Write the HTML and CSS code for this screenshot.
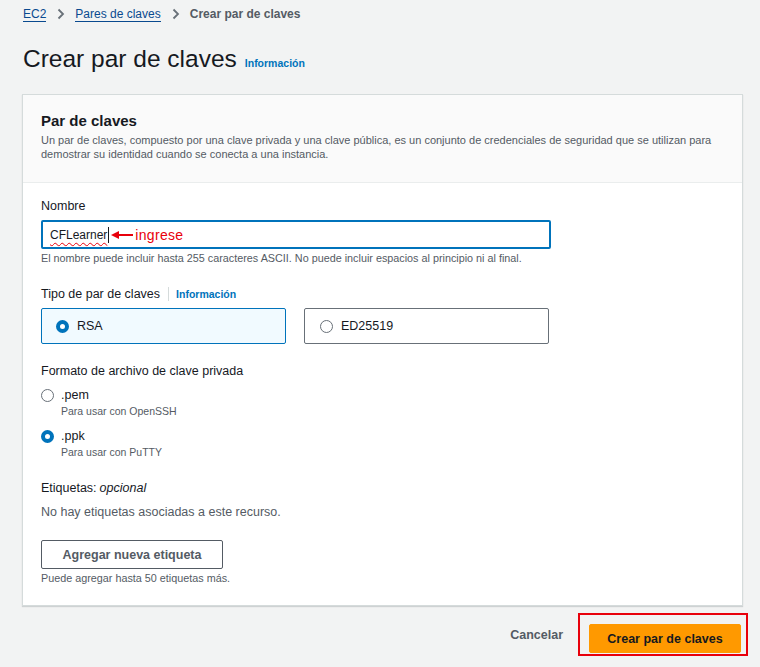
FILE: index.html
```html
<!DOCTYPE html>
<html lang="es">
<head>
<meta charset="utf-8">
<title>Crear par de claves</title>
<link rel="stylesheet" href="styles.css">
</head>
<body>
<div class="page">
  <nav class="crumbs">
    <a class="crumb-link">EC2</a>
    <svg class="chev" width="8" height="12" viewBox="0 0 8 12"><path d="M1.5 1.5 L6 6 L1.5 10.5" fill="none" stroke="#687078" stroke-width="1.8"/></svg>
    <a class="crumb-link">Pares de claves</a>
    <svg class="chev" width="8" height="12" viewBox="0 0 8 12"><path d="M1.5 1.5 L6 6 L1.5 10.5" fill="none" stroke="#687078" stroke-width="1.8"/></svg>
    <span class="crumb-current">Crear par de claves</span>
  </nav>
  <div class="title-row">
    <h1 class="title">Crear par de claves</h1>
    <a class="info">Información</a>
  </div>

  <section class="card">
    <header class="card-head">
      <h2 class="card-title">Par de claves</h2>
      <p class="card-desc">Un par de claves, compuesto por una clave privada y una clave pública, es un conjunto de credenciales de seguridad que se utilizan para demostrar su identidad cuando se conecta a una instancia.</p>
    </header>
    <div class="card-body">
      <div class="field">
        <div class="label">Nombre</div>
        <div class="input">
          <span class="value">CFLearner</span><span class="caret"></span>
          <svg class="arrow" width="22" height="10" viewBox="0 0 22 10"><path d="M0 5 L8 1 L8 9 Z" fill="#e8000b"/><path d="M7 5 H22" stroke="#e8000b" stroke-width="2"/></svg>
          <span class="note">ingrese</span>
        </div>
        <div class="hint name-hint">El nombre puede incluir hasta 255 caracteres ASCII. No puede incluir espacios al principio ni al final.</div>
      </div>

      <div class="field">
        <div class="label">Tipo de par de claves <span class="sep"></span><a class="info small">Información</a></div>
        <div class="tiles">
          <div class="tile selected"><span class="radio on"></span><span class="tile-text">RSA</span></div>
          <div class="tile"><span class="radio"></span><span class="tile-text">ED25519</span></div>
        </div>
      </div>

      <div class="field format">
        <div class="label">Formato de archivo de clave privada</div>
        <div class="opt">
          <span class="radio"></span>
          <div><div class="opt-title">.pem</div><div class="opt-desc">Para usar con OpenSSH</div></div>
        </div>
        <div class="opt">
          <span class="radio on"></span>
          <div><div class="opt-title">.ppk</div><div class="opt-desc">Para usar con PuTTY</div></div>
        </div>
      </div>

      <div class="field tags">
        <div class="label">Etiquetas: <i>opcional</i></div>
        <div class="empty">No hay etiquetas asociadas a este recurso.</div>
        <button class="btn-normal">Agregar nueva etiqueta</button>
        <div class="hint">Puede agregar hasta 50 etiquetas más.</div>
      </div>
    </div>
  </section>

  <div class="actions">
    <a class="cancel">Cancelar</a>
    <div class="highlight"><button class="btn-primary">Crear par de claves</button></div>
  </div>
</div>
</body>
</html>
```

FILE: styles.css
```css
* { box-sizing: border-box; }
html, body { margin: 0; padding: 0; }
body {
  background: #f2f3f3;
  font-family: "Liberation Sans", Arial, sans-serif;
  color: #16191f;
  width: 760px;
  height: 667px;
  overflow: hidden;
}
.page { padding: 6px 17px 0 22px; }
.crumbs {
  display: flex;
  align-items: center;
  height: 16px;
  font-size: 12px;
  padding-left: 1px;
}
.crumb-link {
  color: #0a4a8f;
  border-bottom: 1px solid #0a4a8f;
  line-height: 14px;
}
.chev { margin: 0 10px 0 11px; }
.crumb-current { color: #545b64; font-weight: bold; }
.title-row {
  display: flex;
  align-items: baseline;
  margin-top: 21px;
  padding-left: 1px;
}
.title {
  margin: 0;
  font-size: 24.5px;
  font-weight: normal;
  line-height: 32px;
  color: #16191f;
}
.info {
  color: #0073bb;
  font-size: 10.5px;
  font-weight: bold;
  margin-left: 8px;
}
.card {
  margin-top: 19px;
  width: 721px;
  background: #fff;
  border: 1px solid #d5dbdb;
  box-shadow: 0 1px 1px rgba(0,28,36,0.15);
}
.card-head {
  background: #fafafa;
  border-bottom: 1px solid #eaeded;
  padding: 16px 18px 21px 18px;
}
.card-title {
  margin: 0;
  font-size: 15px;
  font-weight: bold;
  line-height: 20px;
}
.card-desc {
  margin: 2px 0 0 0;
  font-size: 11px;
  line-height: 14px;
  color: #545b64;
}
.card-body { padding: 14px 18px 20px 18px; }
.field { margin-bottom: 20px; }
.label {
  font-size: 12.5px;
  line-height: 18px;
  display: flex;
  align-items: center;
}
.label i { margin-left: 3px; }
.sep {
  display: inline-block;
  width: 1px;
  height: 14px;
  background: #d5dbdb;
  margin: 0 7px 0 8px;
}
.info.small { margin-left: 0; font-size: 10.5px; }
.input {
  margin-top: 5px;
  width: 510px;
  height: 29px;
  border: 2px solid #0073bb;
  border-radius: 2px;
  display: flex;
  align-items: center;
  padding-left: 7px;
  font-size: 12px;
}
.value {
  text-decoration: underline wavy #e8000b;
  text-decoration-thickness: 1px;
  text-underline-offset: 3px;
}
.caret {
  display: inline-block;
  width: 1px;
  height: 16px;
  background: #16191f;
  margin-left: 1px;
}
.arrow { margin-left: 2px; }
.note {
  color: #e8000b;
  font-size: 14px;
  margin-left: 2px;
  letter-spacing: 0.3px;
}
.hint {
  font-size: 10.8px;
  line-height: 14px;
  color: #545b64;
  margin-top: 2px;
}
.tiles {
  display: flex;
  gap: 18px;
  margin-top: 5px;
}
.tile {
  width: 245px;
  height: 36px;
  border: 1px solid #687078;
  border-radius: 2px;
  display: flex;
  align-items: center;
  padding-left: 15px;
}
.tile.selected {
  background: #f1faff;
  border-color: #0073bb;
  padding-left: 14px;
}
.tile-text { font-size: 12.5px; margin-left: 8px; }
.radio {
  display: inline-block;
  width: 13px;
  height: 13px;
  border-radius: 50%;
  border: 1px solid #687078;
  background: #fff;
  flex: none;
}
.radio.on { border: 4px solid #0073bb; }
.format { margin-top: -2px; }
.opt {
  display: flex;
  align-items: flex-start;
  margin-top: 6px;
}
.opt + .opt { margin-top: 9px; }
.opt .radio { margin-top: 3px; }
.opt > div { margin-left: 7px; }
.opt-title { font-size: 12.5px; line-height: 18px; }
.opt-desc { font-size: 10.5px; line-height: 14px; color: #545b64; }
.tags { margin-bottom: 0; margin-top: 20px; }
.empty {
  font-size: 12.5px;
  line-height: 18px;
  color: #545b64;
  margin-top: 6px;
}
.btn-normal {
  display: block;
  margin-top: 19px;
  width: 182px;
  height: 29px;
  background: #fff;
  border: 1px solid #545b64;
  border-radius: 2px;
  font-family: inherit;
  font-size: 12.5px;
  font-weight: bold;
  color: #545b64;
  padding: 0;
}
.tags .hint { margin-top: 2px; }
.actions {
  display: flex;
  justify-content: flex-end;
  align-items: center;
  margin-top: 7px;
  width: 726px;
}
.cancel {
  font-size: 12.5px;
  font-weight: bold;
  color: #545b64;
  margin-right: 15px;
}
.highlight {
  border: 2px solid #e8000b;
  padding: 9px 5px 1px 9px;
}
.btn-primary {
  display: block;
  width: 152px;
  height: 29px;
  background: #ff9900;
  border: 1px solid #ff9900;
  border-radius: 2px;
  font-family: inherit;
  font-size: 12.5px;
  font-weight: bold;
  color: #16191f;
  padding: 0;
}
```
